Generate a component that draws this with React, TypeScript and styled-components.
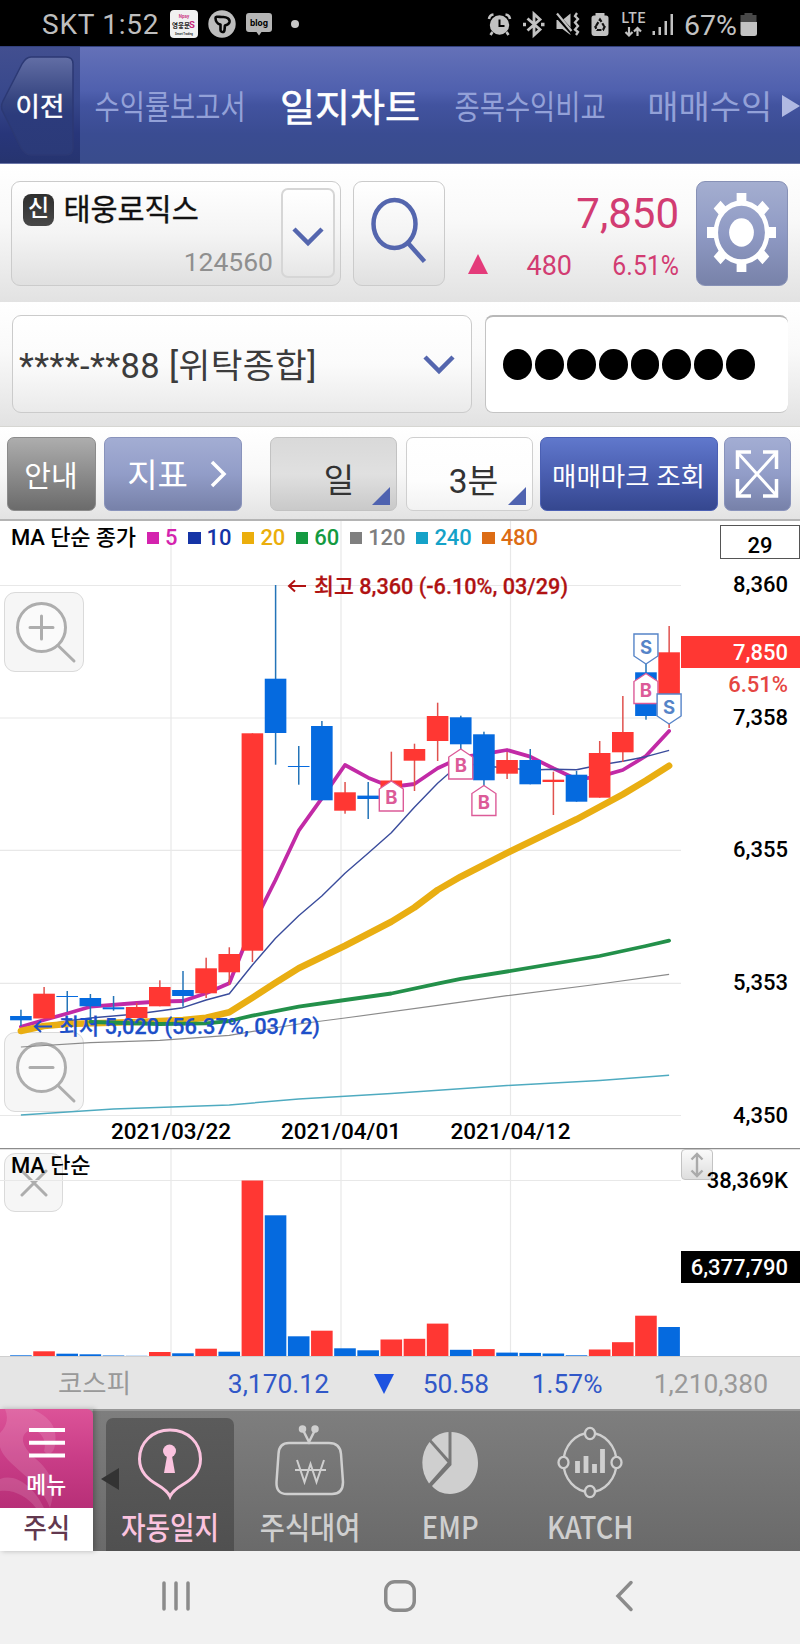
import React from "react";
import styled, { createGlobalStyle, css } from "styled-components";

const GlobalStyle = createGlobalStyle`
  * { box-sizing: border-box; }
  body { margin: 0; background: #fff; font-family: Roboto, "Noto Sans CJK KR", sans-serif; }
  svg { display: block; flex: none; }
`;

const RED = "#ff3733";
const BLUE = "#056adf";
const INDIGO = "#5466ae";

const Screen = styled.div`
  width: 800px;
  height: 1644px;
  display: flex;
  flex-direction: column;
  overflow: hidden;
  background: #fff;
`;

/* ---------- status bar ---------- */

const StatusBar = styled.header`
  height: 46px;
  flex: none;
  display: flex;
  align-items: center;
  justify-content: space-between;
  padding: 1px 43px 0 42px;
  background: #000;
  color: #bebebe;
  font-size: 28px;
  line-height: 46px;
`;

const StatusSide = styled.div<{ $gap: number }>`
  display: flex;
  align-items: center;
  gap: ${(p) => p.$gap}px;
`;

const Carrier = styled.span`
  width: 118px;
  padding-top: 2px;
  white-space: nowrap;
  letter-spacing: 0.75px;
`;

const Dot = styled.i`
  width: 8px;
  height: 8px;
  margin-left: 9px;
  border-radius: 50%;
  background: #c8c8c8;
`;

/* ---------- top tabs ---------- */

const TabBar = styled.nav`
  height: 118px;
  flex: none;
  display: flex;
  border-top: 1px solid #32407c;
  border-bottom: 1px solid #6b76a8;
  background: linear-gradient(#6471b8, #4f60ae 38%, #42539f 50%, #3a4c92 75%, #394c8c);
`;

const BackCell = styled.div`
  position: relative;
  width: 80px;
  background: linear-gradient(#424f90, #37478b 45%, #28367a 75%, #26346f);
`;

const BackLabel = styled.span`
  position: absolute;
  left: 0;
  top: 42px;
  width: 80px;
  text-align: center;
  color: #fff;
  font-size: 26.5px;
  line-height: 36px;
  -webkit-text-stroke: 0.5px;
`;

const Tab = styled.a<{ $active?: boolean; $scale?: number }>`
  position: relative;
  width: 180px;
  flex: none;
  display: flex;
  align-items: center;
  justify-content: center;
  padding: 0 0 ${(p) => (p.$active ? 2 : 0)}px;
  white-space: nowrap;
  color: ${(p) => (p.$active ? "#fff" : "#93a1d8")};
  font-size: ${(p) => (p.$active ? 38 : 33)}px;
  -webkit-text-stroke: ${(p) => (p.$active ? 0.6 : 0)}px;
  span {
    transform: scaleX(${(p) => p.$scale ?? 1});
  }
`;

const MoreTabs = styled.i`
  position: absolute;
  right: 0;
  top: 48px;
  border-left: 18px solid #b0b9e2;
  border-top: 11px solid transparent;
  border-bottom: 11px solid transparent;
`;

/* ---------- stock and account rows ---------- */

const band = css`
  flex: none;
  display: flex;
  background: linear-gradient(#fff, #f9f9f9 40%, #e2e2e2);
`;

const StockRow = styled.section`
  ${band}
  height: 138px;
  padding: 17px 12.5px 16px 11px;
  gap: 12px;
`;

const panel = css`
  border: 1.5px solid #cbcbcb;
  border-radius: 9px;
  background: linear-gradient(#fff, #f4f4f4 50%, #e0e0e0);
`;

const StockBox = styled.div`
  ${panel}
  width: 330px;
  display: flex;
  padding: 6px 5px 6px 10px;
`;

const StockText = styled.div`
  flex: 1;
  display: flex;
  flex-direction: column;
  justify-content: space-between;
  padding: 0 8px 0 0;
`;

const StockName = styled.div`
  display: flex;
  align-items: center;
  gap: 9.5px;
  height: 40px;
  white-space: nowrap;
  color: #111;
  font-size: 29.4px;
  line-height: 40px;
`;

const StockLabel = styled.span`
  padding-top: 4px;
  -webkit-text-stroke: 0.35px;
`;

const Badge = styled.span`
  width: 31px;
  height: 32px;
  margin: 4px 0 0 1px;
  border-radius: 8px;
  background: linear-gradient(#2e2e2e, #484848);
  color: #fff;
  font-size: 23px;
  font-weight: 500;
  line-height: 30px;
  text-align: center;
`;

const StockCode = styled.div`
  height: 40px;
  text-align: right;
  color: #8f8f8f;
  font-size: 26.5px;
  line-height: 46px;
`;

const DropButton = styled.button`
  width: 54px;
  height: 90px;
  padding: 7px 0 0;
  display: grid;
  place-items: center;
  border: 2px solid #d6d6d6;
  border-radius: 7px;
  background: linear-gradient(#fff, #f4f4f4 60%, #e6e6e6);
`;

const SearchButton = styled.button`
  ${panel}
  width: 92px;
  padding: 0 0 8px 0;
  display: grid;
  place-items: center;
`;

const GearButton = styled.button`
  width: 92px;
  padding: 0 0 2px 0;
  display: grid;
  place-items: center;
  border: 1px solid #8791b6;
  border-radius: 9px;
  background: linear-gradient(#a4aed0, #8f9ac4 50%, #7882a9);
`;

const Quote = styled.div`
  flex: 1;
  padding: 10px 4.5px 0 0;
  color: #d23c72;
  text-align: right;
`;

const Price = styled.div`
  height: 46px;
  font-size: 42px;
  line-height: 46px;
`;

const Change = styled.div`
  display: grid;
  grid-template-columns: 31px 84px 107px;
  align-items: center;
  height: 53px;
  font-size: 27px;
  line-height: 50px;
  span { padding-top: 4px; }
`;

const ChangeRate = styled.span`
  transform: scaleX(0.92);
  transform-origin: right;
`;

const Triangle = styled.i<{ $down?: boolean }>`
  width: 0;
  height: 0;
  justify-self: end;
  border-left: 10px solid transparent;
  border-right: 10px solid transparent;
  ${(p) => (p.$down ? "border-top: 20px solid #1d52e0;" : "border-bottom: 20px solid #e43b7a;")}
`;

const AccountRow = styled.section`
  ${band}
  height: 125px;
  padding: 13px 12px 13px;
  gap: 13px;
  border-bottom: 1px solid #d6d6d2;
`;

const AccountSelect = styled.div`
  ${panel}
  background: linear-gradient(#fff, #fbfbfb 50%, #eaeaea);
  width: 460px;
  display: flex;
  align-items: center;
  justify-content: space-between;
  padding: 0 16px 3px 6px;
  color: #3c3c3c;
  font-size: 34.5px;
  letter-spacing: 0.4px;
  white-space: nowrap;
  svg { position: relative; top: 2px; }
`;

const PasswordField = styled.div`
  flex: 1;
  display: flex;
  align-items: center;
  gap: 3px;
  padding-left: 17px;
  border: 1.5px solid #c4c4c4;
  border-right: 0;
  border-top: 2px solid #b8b8b8;
  border-radius: 8px;
  background: #fff;
  i {
    width: 28.9px;
    height: 30.5px;
    border-radius: 50%;
    background: #000;
  }
`;

/* ---------- chart toolbar ---------- */

const Toolbar = styled.section`
  height: 94px;
  flex: none;
  display: flex;
  padding: 10px 9px 9px 6.5px;
  background: linear-gradient(#fff, #f8f8f8 50%, #e3e3e3);
  border-bottom: 2px solid #b4b4b4;
`;

type Tone = "gray" | "light" | "blue" | "period" | "plain";

const tones: Record<Tone, string> = {
  gray: "background: linear-gradient(#adadad, #6b6b6b); color: #fff; border-color: #8b8b8b;",
  light: "background: linear-gradient(#a3add3, #929dc8 50%, #7781a9); color: #fff; border-color: #8993bb;",
  blue: "background: linear-gradient(#6078cc, #4a5eb0 50%, #35478f); color: #fff; border-color: #4b60b4;",
  period: "background: linear-gradient(#d9d9d9, #e0e0e0 50%, #c9c9c9); color: #333; border-color: #c2c2c2;",
  plain: "background: linear-gradient(#fff, #fdfdfd 60%, #f2f2f2); color: #333; border-color: #cfcfcf;",
};

const ToolButton = styled.button<{ $tone: Tone; $w: number; $size?: number; $ml?: number }>`
  position: relative;
  width: ${(p) => p.$w}px;
  height: 74px;
  margin-left: ${(p) => p.$ml ?? 8}px;
  padding: 0;
  flex: none;
  display: flex;
  align-items: center;
  justify-content: center;
  border: 1.5px solid;
  border-radius: 7px;
  font-family: inherit;
  font-size: ${(p) => p.$size ?? 29}px;
  white-space: nowrap;
  ${(p) => tones[p.$tone]}
`;

const IndicatorLabel = styled.span`
  margin: 0 22px 2px 9px;
`;

const PeriodText = styled.span<{ $indent: number }>`
  padding: 8px 0 0 ${(p) => p.$indent}px;
`;

const Corner = styled.i`
  position: absolute;
  right: 6px;
  bottom: 5px;
  border-left: 18px solid transparent;
  border-bottom: 18px solid #4f63b0;
`;

/* ---------- chart ---------- */

const ChartPane = styled.section<{ $h: number }>`
  position: relative;
  height: ${(p) => p.$h}px;
  flex: none;
  overflow: hidden;
  background: #fff;
`;

const Plot = styled.svg`
  position: relative;
`;

const Legend = styled.div<{ $top: number }>`
  position: absolute;
  left: 11px;
  top: ${(p) => p.$top}px;
  display: flex;
  align-items: center;
  height: 30px;
  white-space: nowrap;
  color: #000;
  font-size: 22px;
  font-weight: 500;
  letter-spacing: -0.12px;
  line-height: 30px;
`;

const LegendItem = styled.span<{ $color: string }>`
  display: flex;
  align-items: center;
  gap: 6px;
  margin-left: 10.6px;
  color: ${(p) => p.$color};
  &::before {
    content: "";
    width: 12.5px;
    height: 12.5px;
    background: ${(p) => p.$color};
  }
`;

const Overlay = styled.button<{ $top: number; $size: number }>`
  position: absolute;
  left: 4px;
  top: ${(p) => p.$top}px;
  width: ${(p) => p.$size}px;
  height: ${(p) => p.$size}px;
  padding: 0;
  display: grid;
  place-items: center;
  border: 1.5px solid #dadada;
  border-radius: 11px;
  background: #f6f6f6;
`;

const CountBox = styled.div`
  position: absolute;
  right: 0;
  top: 4px;
  width: 80px;
  height: 34px;
  border: 1.5px solid #555;
  color: #000;
  text-align: center;
  font-weight: 500;
  font-size: 22px;
  line-height: 39px;
`;

const AxisTag = styled.div<{ $top: number; $bg: string }>`
  position: absolute;
  right: 0;
  top: ${(p) => p.$top}px;
  width: 119px;
  height: 32px;
  padding-right: 12px;
  background: ${(p) => p.$bg};
  color: #fff;
  text-align: right;
  font-weight: 500;
  font-size: 22px;
  line-height: 34px;
`;

const AxisLabel = styled.div<{ $y: number; $color?: string }>`
  position: absolute;
  right: 12px;
  top: ${(p) => p.$y - 15}px;
  color: ${(p) => p.$color ?? "#000"};
  font-weight: 500;
  font-size: 22px;
  line-height: 30px;
`;

const ResizeHandle = styled.button`
  position: absolute;
  left: 681px;
  top: 1px;
  width: 32px;
  height: 31px;
  padding: 0;
  display: grid;
  place-items: center;
  border: 1.5px solid #c3c3c3;
  border-radius: 4px;
  background: linear-gradient(#fafafa, #dedede);
`;

/* ---------- index strip ---------- */

const IndexBar = styled.section`
  height: 53px;
  flex: none;
  display: grid;
  grid-template-columns: 189px 140px 64.5px 95.5px 113.5px 165.5px;
  align-items: center;
  border-top: 1px solid #cfcfcf;
  background: #e5e5e5;
  color: #3158c8;
  text-align: right;
  font-size: 26.4px;
  line-height: 52px;
  span { padding-top: 1px; }
`;

const IndexName = styled.span`
  text-align: center;
  color: #999;
`;

const IndexVolume = styled.span`
  color: #999;
`;

/* ---------- bottom navigation ---------- */

const BottomNav = styled.nav`
  height: 142px;
  flex: none;
  display: flex;
  border-top: 2px solid #979797;
  background: linear-gradient(#7e7e7e, #6a6a6a);
`;

const MenuCell = styled.div`
  position: relative;
  width: 93px;
  height: 142px;
  margin: -2px 7px 0 0;
  display: flex;
  flex-direction: column;
  color: #fff;
  box-shadow: 2px 0 5px rgba(0, 0, 0, 0.25);
`;

const MenuTop = styled.div`
  position: relative;
  height: 99px;
  overflow: hidden;
  border-top-right-radius: 6px;
  background: linear-gradient(#dc5398, #c93d87 50%, #b72f77);
  text-align: center;
  font-size: 23px;
  font-weight: 500;
  line-height: 30px;
`;

const MenuContent = styled.div`
  position: absolute;
  left: 0;
  top: 19px;
  width: 93px;
  display: flex;
  flex-direction: column;
  align-items: center;
  gap: 13px;
`;

const MenuLabel = styled.span`
  transform: scaleX(0.94);
`;

const MenuBottom = styled.div`
  flex: 1;
  background: #fff;
  color: #62384f;
  text-align: center;
  font-size: 27px;
  font-weight: 500;
  line-height: 42px;
  span { display: inline-block; transform: scaleX(0.94); }
`;

const Collapse = styled.i`
  position: absolute;
  left: 101px;
  top: 59px;
  z-index: 1;
  border-right: 18px solid #333;
  border-top: 11px solid transparent;
  border-bottom: 11px solid transparent;
`;

const NavItem = styled.a<{ $active?: boolean }>`
  width: 128px;
  margin: 7px 6px 0;
  display: flex;
  flex-direction: column;
  align-items: center;
  border-radius: 7px 7px 0 0;
  background: ${(p) => (p.$active ? "linear-gradient(#5b5b5b, #505050)" : "none")};
  color: ${(p) => (p.$active ? "#fbc3df" : "#cfcfcf")};
  svg { height: 90px; }
`;

const NavLabel = styled.span<{ $scale: number }>`
  white-space: nowrap;
  font-size: 31px;
  font-weight: 500;
  line-height: 36px;
  font-family: "Noto Sans CJK KR", sans-serif;
  transform: scaleX(${(p) => p.$scale});
`;

const SystemNav = styled.footer`
  flex: 1;
  display: flex;
  align-items: center;
  padding: 0 0 4px 159px;
  gap: 193px;
  background: #f1f1f1;
`;

/* ---------- chart data ---------- */

const STEP = 23.15;
const X0 = 20.9;
const cx = (i: number) => X0 + STEP * i;

type Candle = [up: 0 | 1, top: number, bottom: number, high: number, low: number];

const candles: Candle[] = [
  [0, 1016, 1020.3, 1009.7, 1026],
  [1, 993.7, 1018.5, 987, 1018.5],
  [0, 996, 997, 991, 1012],
  [0, 998, 1006.3, 994, 1018],
  [0, 1007.3, 1009.3, 996, 1010.7],
  [1, 1007, 1018, 1003, 1018],
  [1, 987, 1006.3, 980.3, 1006.3],
  [0, 990, 996, 971, 1006.7],
  [1, 968.3, 993.3, 957.7, 998],
  [1, 954, 972.3, 947.3, 985],
  [1, 733.3, 950.7, 733.3, 962],
  [0, 678.7, 733, 585, 764.7],
  [0, 766, 767, 746, 784.7],
  [0, 726, 800.3, 721, 800.3],
  [1, 792.3, 810.7, 782, 813.7],
  [0, 795.6, 799, 782, 819],
  [1, 780.5, 790, 751.7, 790],
  [1, 749, 760.7, 743.7, 791],
  [1, 716, 741, 702.7, 761],
  [0, 717.3, 744.3, 715.7, 750],
  [0, 734.3, 780.3, 731.7, 786],
  [1, 760, 773.7, 752, 779],
  [0, 760, 784.3, 749, 784.3],
  [1, 779.7, 782, 771.7, 815],
  [0, 774.7, 801.7, 771, 801.7],
  [1, 753, 797.7, 741, 797.7],
  [1, 732, 752.3, 696, 762],
  [0, 672.3, 716, 664, 719.7],
  [1, 652.3, 700, 626, 728],
];

const volumes = [
  0.7, 4.7, 2.3, 1.7, 0.5, 0.2, 4, 2.7, 7.3, 4.3, 175.5, 140.7, 19.7, 25.3, 7.7, 5.7, 16.5, 17.2,
  32.4, 6.2, 6.9, 3.4, 3.1, 2.5, 0.7, 6.5, 13.8, 40.3, 29,
];
const volumeUp = new Set([1, 6, 8, 10, 13, 16, 17, 18, 20, 25, 26, 27]);

type Point = [index: number, y: number];

const ma5: Point[] = [
  [0, 1026.7], [1, 1020], [2, 1013.5], [3, 1006.7], [5, 1003], [6, 1001.5], [7, 1001], [8, 993.3],
  [9, 983.3], [10, 926], [11, 880], [12, 830.7], [13, 798.3], [14, 765], [15, 777.7], [16, 787],
  [17, 784], [18, 768.3], [19, 757.5], [20, 754], [21, 750], [22, 756.7], [23, 768.3], [24, 779.3],
  [25, 776.7], [26, 770], [27, 756], [28, 731],
];
const ma10: Point[] = [
  [0, 1029], [2, 1021], [3, 1018], [5, 1014], [7, 1007.7], [8, 1000], [9, 993.7], [10, 965],
  [11, 938.3], [12, 915.7], [13, 896], [14, 873.3], [15, 853.3], [16, 832.7], [17, 807.3],
  [18, 783.3], [19, 763], [20, 766], [21, 768], [22, 770], [23, 769.3], [24, 769.7], [25, 765],
  [26, 761.3], [27, 756.7], [28, 750.3],
];
const ma20: Point[] = [
  [0, 1031], [1, 1026], [2, 1024], [5, 1022], [7, 1020], [8, 1017.7], [9, 1012.3], [10, 997.7],
  [11, 982.7], [12, 968.3], [14, 945.7], [16, 921.7], [17, 907.5], [18, 890], [19, 876.7],
  [21, 853], [23, 830.5], [24, 819.3], [26, 794.3], [27, 780.5], [28, 765.7],
];
const ma60: Point[] = [
  [0, 1030], [1, 1022], [3, 1022], [6, 1024], [8, 1023.3], [9, 1021], [10, 1015.7], [12, 1006.7],
  [14, 1000], [16, 993.5], [18, 983.6], [19, 978.8], [21, 971.5], [25, 956], [27, 946], [28, 940.6],
];
const ma120: Point[] = [
  [0, 1047], [3, 1042.7], [6, 1040.3], [9, 1035.3], [12, 1024], [14, 1018], [18, 1005.3],
  [21, 995.7], [25, 984], [28, 974.3],
];
const ma240: Point[] = [
  [0, 1115], [4, 1109], [9, 1105], [12, 1099], [16, 1093.4], [21, 1085.5], [25, 1080.4], [28, 1075.2],
];

const toPoints = (line: Point[]) => line.map(([i, y]) => `${cx(i).toFixed(1)},${y}`).join(" ");

const Average = ({ line, color, width }: { line: Point[]; color: string; width: number }) => (
  <polyline
    points={toPoints(line)}
    fill="none"
    stroke={color}
    strokeWidth={width}
    strokeLinecap={width > 2 ? "round" : "butt"}
    strokeLinejoin="round"
  />
);

const markFont = { fontFamily: "Inter, Roboto, sans-serif", fontWeight: 700, fontSize: 18.5 };

/* Trade flags: a buy flag points up at its tip, a sell flag points down. */
const Flag = ({ kind, index, tip }: { kind: "B" | "S"; index: number; tip: number }) => {
  const x = cx(index);
  const dir = kind === "B" ? 1 : -1;
  const color = kind === "B" ? "#dc5b98" : "#5584c8";
  return (
    <g>
      <path
        d={`M${x} ${tip} L${x + 12} ${tip + 8 * dir} V${tip + 30 * dir} H${x - 12} V${tip + 8 * dir} Z`}
        fill="#fff"
        stroke={color}
        strokeWidth="1.4"
      />
      <text x={x} y={tip + 18 * dir + (dir > 0 ? 5 : 8)} textAnchor="middle" fill={color} {...markFont}>
        {kind}
      </text>
    </g>
  );
};

const gridX = [171, 341, 510.5];

const PriceChart = () => (
  <Plot width="800" height="627" viewBox="0 521 800 627">
    <g stroke="#e8e8e8" strokeWidth="1.2">
      {[585.5, 718, 850.3, 983.3, 1115.5].map((y) => (
        <line key={y} x1="0" x2="681" y1={y} y2={y} />
      ))}
      {gridX.map((x) => (
        <line key={x} x1={x} x2={x} y1="520" y2="1115" />
      ))}
    </g>
    <Average line={ma5} color="#c22aa6" width={3.8} />
    <Average line={ma10} color="#3a4c9c" width={1.4} />
    <Average line={ma20} color="#e9ae12" width={6.6} />
    <Average line={ma60.slice(2)} color="#23904a" width={3.8} />
    <Average line={ma120} color="#8b8b8b" width={1.2} />
    <Average line={ma240} color="#4fabc0" width={1.5} />
    {candles.map(([up, top, bottom, high, low], i) => (
      <g key={i} fill={up ? RED : BLUE}>
        <rect x={cx(i) - 0.7} y={high} width="1.5" height={low - high} fill={up ? "#e0524e" : "#2474b8"} />
        <rect x={cx(i) - 10.8} y={top} width="21.6" height={bottom - top} />
      </g>
    ))}
    <Flag kind="B" index={16} tip={781} />
    <Flag kind="B" index={19} tip={749} />
    <Flag kind="B" index={20} tip={785.5} />
    <Flag kind="S" index={27} tip={664} />
    <Flag kind="B" index={27} tip={673.5} />
    <Flag kind="S" index={28} tip={724} />
    <g fontWeight="500" fontSize="22">
      <g fill="#b01212" stroke="#b01212" strokeWidth="0.25">
        <path d="M306 586 H289 M295 580.5 L289 586 L295 591.5" fill="none" strokeWidth="2" />
        <text x="314" y="594.3" textLength="254" lengthAdjust="spacingAndGlyphs">
          최고 8,360 (-6.10%, 03/29)
        </text>
      </g>
      <g fill="#1d4fc9" stroke="#1d4fc9" strokeWidth="0.25">
        <path d="M52 1026.5 H35 M41 1021 L35 1026.5 L41 1032" fill="none" strokeWidth="2" />
        <text x="59" y="1034" textLength="261" lengthAdjust="spacingAndGlyphs">
          최저 5,020 (56.37%, 03/12)
        </text>
      </g>
      {["2021/03/22", "2021/04/01", "2021/04/12"].map((d, i) => (
        <text key={d} x={gridX[i]} y="1138.5" textAnchor="middle" textLength="120" lengthAdjust="spacingAndGlyphs">
          {d}
        </text>
      ))}
    </g>
  </Plot>
);

const VolumeChart = () => (
  <Plot width="800" height="208" viewBox="0 1148 800 208">
    <g stroke="#e8e8e8" strokeWidth="1.2">
      <line x1="0" x2="681" y1="1180.5" y2="1180.5" />
      {gridX.map((x) => (
        <line key={x} x1={x} x2={x} y1="1148" y2="1356" />
      ))}
    </g>
    {volumes.map((h, i) => (
      <rect key={i} x={cx(i) - 10.8} y={1356 - h} width="21.6" height={h} fill={volumeUp.has(i) ? RED : BLUE} />
    ))}
    <line x1="0" x2="800" y1="1148.5" y2="1148.5" stroke="#8c8c8c" strokeWidth="1.4" />
  </Plot>
);

/* ---------- icons ---------- */

const Chevron = () => (
  <svg width="32" height="22" viewBox="0 0 32 22" fill="none" stroke={INDIGO} strokeWidth="4.5">
    <path d="M2 3 L16 17 L30 3" />
  </svg>
);

const Magnifier = ({ sign }: { sign: "plus" | "minus" }) => (
  <svg width="80" height="80" viewBox="0 0 80 80" fill="none" stroke="#adadad" strokeWidth="3" strokeLinecap="round">
    <circle cx="36.5" cy="34.5" r="24" fill="#fafafa" />
    <path d="M53 52.5 L69 68" />
    <path d={sign === "plus" ? "M25 34.5 H48 M36.5 23 V46" : "M25 34.5 H48"} />
  </svg>
);

const Gear = () => (
  <svg width="69" height="79" viewBox="-39 -39 78 78" preserveAspectRatio="none" fill="#fff">
    {[0, 45, 90, 135].map((a) => (
      <path key={a} d="M-5.5 -39 H5.5 V-28 H-5.5 Z M-5.5 39 H5.5 V28 H-5.5 Z" transform={`rotate(${a})`} />
    ))}
    <circle r="29" fill="none" stroke="#fff" strokeWidth="5" />
    <circle r="14" />
  </svg>
);

const SearchIcon = () => (
  <svg width="58" height="68" viewBox="0 0 58 68" fill="none" stroke={INDIGO} strokeWidth="4.5">
    <ellipse cx="24.5" cy="28" rx="21" ry="24" />
    <path d="M38 47 L54.5 65.5" />
  </svg>
);

const Expand = () => (
  <svg width="44" height="48" viewBox="0 0 44 48" fill="none" stroke="#fff" strokeWidth="3">
    <path d="M3 3 L41 45 M41 3 L3 45" />
    <path d="M2.5 19 V2 H16 M28 2 H41.5 V19 M41.5 29 V46 H28 M16 46 H2.5 V29" strokeWidth="3.5" />
  </svg>
);

const NotificationIcons = () => (
  <>
    <svg width="28" height="28" viewBox="0 0 28 28">
      <rect width="28" height="28" rx="4" fill="#f1f1f1" />
      <g textAnchor="middle" fontWeight="700">
        <text x="14" y="7.5" fontSize="4.5" fill="#cc3c85">Npay</text>
        <text x="11" y="17.5" fontSize="6.5" fill="#222">영웅문</text>
        <text x="22" y="18" fontSize="9.5" fill="#c9277b">S</text>
        <text x="14" y="24.5" fontSize="2.8" fill="#333">Smart Trading</text>
      </g>
    </svg>
    <svg width="28" height="28" viewBox="0 0 28 28">
      <circle cx="14" cy="14" r="13.7" fill="#bdbdbd" />
      <path
        d="M7.5 8 C7.5 6 11 7 14 7 C19 6.5 22 9 21.5 12 C21 14.5 19 15 17 15.5 C16.5 17 17 20 16 21.5 C15 22.5 12.5 22 12.5 20 V14.5 C9.5 14 7.5 11 7.5 8 Z"
        fill="none"
        stroke="#050505"
        strokeWidth="2.6"
        strokeLinejoin="round"
      />
    </svg>
    <svg width="26" height="24" viewBox="0 0 26 24">
      <path d="M3 1 H23 Q26 1 26 4 V17 Q26 20 23 20 H15.5 L13 23.5 L10.5 20 H3 Q0 20 0 17 V4 Q0 1 3 1 Z" fill="#b5b5b5" />
      <text x="13" y="13.5" textAnchor="middle" fontSize="9" fontWeight="700" fontFamily="Inter, sans-serif" textLength="18" lengthAdjust="spacingAndGlyphs">blog</text>
    </svg>
  </>
);

const SystemIcons = () => (
  <svg width="270" height="46" viewBox="487.5 0 270 46" fill="#c2c2c2">
    <g stroke="#c2c2c2" fill="none">
      <circle cx="500" cy="24" r="8.2" fill="#c2c2c2" strokeWidth="3" />
      <path d="M489.5 18 Q490 14 494 13.5 M510.5 18 Q510 14 506 13.5 M493 31 L491 34 M507 31 L509 34" strokeWidth="2.6" />
      <path d="M500 18.5 V25 H505" stroke="#000" strokeWidth="2" />
      <path d="M528 17.5 L540.5 28.5 L534.5 34 V13 L540.5 18.5 L528 29.5" strokeWidth="2.8" />
      <path d="M523.5 23.5 H526.5 M541.5 23.5 H545" strokeWidth="3.5" />
    </g>
    <path d="M557 19 H563 L571 12.5 V34 L563 28 H557 Z" />
    <path d="M556 13 L573 32" stroke="#000" strokeWidth="4.5" />
    <path d="M557.5 12.5 L572 30" stroke="#c2c2c2" strokeWidth="2.2" />
    <path d="M577.5 12 L575.5 15 L578.5 18 L575.5 21.5 L578.5 25 L575.5 28.5 L578.5 31 L576.5 34" fill="none" stroke="#c2c2c2" strokeWidth="2.3" />
    <path d="M596 12 H605 V14.5 H606.5 Q609 14.5 609 17 V32 Q609 35 606 35 H595 Q592 35 592 32 V17 Q592 14.5 594.5 14.5 H596 Z" />
    <path d="M596.5 25 L600.5 18.5 L604.5 25 M605.5 25 L603.5 29 H597.5 L595.5 25" fill="none" stroke="#111" strokeWidth="2.2" strokeDasharray="4.5 1.5" />
    <text x="622" y="22" fontSize="14" fontWeight="500" textLength="24">LTE</text>
    <path d="M629.5 26 V34 M626 31 L629.5 34.5 L633 31 M638 35 V27.5 M634.5 30.5 L638 27 L641.5 30.5" fill="none" stroke="#c2c2c2" strokeWidth="2.2" />
    <path d="M653 30 H655.5 V34 H653 Z M659 26 H661.5 V34 H659 Z M665 20 H667.5 V34 H665 Z M671 13 H673.5 V34 H671 Z" />
    <text x="684.5" y="34" fontSize="28" textLength="53" lengthAdjust="spacingAndGlyphs">67%</text>
    <path d="M745 12 H753 V14 H757 V21 H741 V14 H745 Z" fill="#484848" />
    <path d="M741 21 H757.5 V33 Q757.5 35 755 35 H743.5 Q741 35 741 33 Z" />
  </svg>
);

const DiaryIcon = () => (
  <svg width="128" viewBox="0 0 128 90">
    <path
      d="M64 12 C46 12 33.5 25 33.5 41 C33.5 54 42 61 51 66.5 C57 70 62 74 64 78.5 C66 74 71 70 77 66.5 C86 61 94.5 54 94.5 41 C94.5 25 82 12 64 12 Z"
      fill="none"
      stroke="#fbc3df"
      strokeWidth="3"
    />
    <circle cx="63.5" cy="33" r="6.5" fill="#fbc3df" />
    <path d="M61 38 H66 L69 55 H58 Z" fill="#fbc3df" />
  </svg>
);

const TvIcon = () => (
  <svg width="128" viewBox="0 0 128 90" fill="none" stroke="#cfcfcf" strokeWidth="2.5">
    <path d="M43 25 H83 Q94 25 95 36 L97 64 Q97 76 86 76 H41 Q30 76 30.5 64 L32.5 36 Q33 25 43 25 Z" />
    <path d="M57 12 L63 24 L69 12" />
    <circle cx="56.5" cy="11" r="2.5" fill="#cfcfcf" />
    <circle cx="69" cy="11" r="2.5" fill="#cfcfcf" />
    <path d="M51 42 L58.5 64 L64.5 46 L70.5 64 L78 42 M49 52 H80" strokeWidth="2" />
  </svg>
);

const PieIcon = () => (
  <svg width="128" viewBox="0 0 128 90" fill="#cfcfcf">
    <path d="M65.5 14 C81 14 92 28 92 45 C92 62 80 76 64 76 C57 76 50 73 46 68 L65.5 47 Z" />
    <path d="M62.5 14 V41 L45.5 22 C50 17 56 14.5 62.5 14 Z" />
    <path d="M43.5 24 L61.5 44.5 L43 65.5 C34 53 34 36 43.5 24 Z" />
  </svg>
);

const KatchIcon = () => (
  <svg width="128" viewBox="0 0 128 90" fill="none" stroke="#cfcfcf" strokeWidth="2.3">
    <ellipse cx="64" cy="44.5" rx="26.5" ry="29.5" />
    <g fill="#747474">
      <ellipse cx="64" cy="15.5" rx="5" ry="5.7" />
      <ellipse cx="64" cy="73.5" rx="5" ry="5.7" />
      <ellipse cx="37.5" cy="44.5" rx="5" ry="5.7" />
      <ellipse cx="90.5" cy="44.5" rx="5" ry="5.7" />
    </g>
    <path d="M51.5 55 V43 M60 55 V38 M68.5 55 V46 M76.5 55 V31" strokeWidth="4.8" />
  </svg>
);

const legend: [string, string][] = [
  ["5", "#d423ae"],
  ["10", "#1534a6"],
  ["20", "#ebae0c"],
  ["60", "#149a41"],
  ["120", "#7f7f7f"],
  ["240", "#15a2c8"],
  ["480", "#dc6c15"],
];

export default function App() {
  return (
    <>
      <GlobalStyle />
      <Screen>
        <StatusBar>
          <StatusSide $gap={10}>
            <Carrier>SKT 1:52</Carrier>
            <NotificationIcons />
            <Dot />
          </StatusSide>
          <SystemIcons />
        </StatusBar>

        <TabBar>
          <BackCell>
            <svg width="80" height="116" viewBox="0 0 80 116">
              <defs>
                <linearGradient id="back" x1="0" y1="0" x2="0" y2="1">
                  <stop offset="0" stopColor="#626ea5" />
                  <stop offset=".45" stopColor="#34437f" />
                  <stop offset=".6" stopColor="#2c3b7c" />
                  <stop offset="1" stopColor="#2b3a78" />
                </linearGradient>
              </defs>
              <path
                d="M31 10 H66 Q73 10 73 17 V101 Q73 108 66 108 H31 Q25 108 21 101 L3 65 Q0 60 3 54 L22 17 Q26 10 31 10 Z"
                fill="url(#back)"
                stroke="#2c3974"
                strokeWidth="1.5"
              />
            </svg>
            <BackLabel>이전</BackLabel>
          </BackCell>
          <Tab $scale={0.83}><span>수익률보고서</span></Tab>
          <Tab $active><span>일지차트</span></Tab>
          <Tab $scale={0.83}><span>종목수익비교</span></Tab>
          <Tab $scale={1.03}>
            <span>매매수익</span>
            <MoreTabs />
          </Tab>
        </TabBar>

        <StockRow>
          <StockBox>
            <StockText>
              <StockName>
                <Badge>신</Badge>
                <StockLabel>태웅로직스</StockLabel>
              </StockName>
              <StockCode>124560</StockCode>
            </StockText>
            <DropButton><Chevron /></DropButton>
          </StockBox>
          <SearchButton><SearchIcon /></SearchButton>
          <Quote>
            <Price>7,850</Price>
            <Change>
              <Triangle />
              <span>480</span>
              <ChangeRate>6.51%</ChangeRate>
            </Change>
          </Quote>
          <GearButton><Gear /></GearButton>
        </StockRow>

        <AccountRow>
          <AccountSelect>
            ****-**88 [위탁종합]
            <Chevron />
          </AccountSelect>
          <PasswordField>
            {Array.from({ length: 8 }, (_, i) => <i key={i} />)}
          </PasswordField>
        </AccountRow>

        <Toolbar>
          <ToolButton $tone="gray" $w={89} $ml={0}>안내</ToolButton>
          <ToolButton $tone="light" $w={138} $size={33}>
            <IndicatorLabel>지표</IndicatorLabel>
            <svg width="17" height="28" viewBox="0 0 17 28" fill="none" stroke="#fff" strokeWidth="3.5">
              <path d="M2 2 L14 14 L2 26" />
            </svg>
          </ToolButton>
          <ToolButton $tone="period" $w={127} $size={33} $ml={28}>
            <PeriodText $indent={12}>일</PeriodText>
            <Corner />
          </ToolButton>
          <ToolButton $tone="plain" $w={127} $size={33.5} $ml={9}>
            <PeriodText $indent={9}>3분</PeriodText>
            <Corner />
          </ToolButton>
          <ToolButton $tone="blue" $w={178} $size={26.5} $ml={7}>
            매매마크 조회
          </ToolButton>
          <ToolButton $tone="light" $w={67} $ml={6}><Expand /></ToolButton>
        </Toolbar>

        <ChartPane $h={627}>
          <Overlay $top={71} $size={80}><Magnifier sign="plus" /></Overlay>
          <Overlay $top={511} $size={80}><Magnifier sign="minus" /></Overlay>
          <PriceChart />
          <Legend $top={2}>
            MA 단순 종가
            {legend.map(([label, color]) => (
              <LegendItem key={label} $color={color}>{label}</LegendItem>
            ))}
          </Legend>
          <CountBox>29</CountBox>
          <AxisLabel $y={64}>8,360</AxisLabel>
          <AxisTag $top={114.5} $bg={RED}>7,850</AxisTag>
          <AxisLabel $y={163.5} $color="#e54542">6.51%</AxisLabel>
          <AxisLabel $y={197}>7,358</AxisLabel>
          <AxisLabel $y={329}>6,355</AxisLabel>
          <AxisLabel $y={462}>5,353</AxisLabel>
          <AxisLabel $y={594.5}>4,350</AxisLabel>
        </ChartPane>

        <ChartPane $h={208}>
          <Overlay $top={5} $size={59}>
            <svg width="28" height="28" viewBox="0 0 28 28" stroke="#adadad" strokeWidth="3" strokeLinecap="round">
              <path d="M2 2 L26 26 M26 2 L2 26" />
            </svg>
          </Overlay>
          <VolumeChart />
          <Legend $top={2.5}>MA 단순</Legend>
          <ResizeHandle>
            <svg width="14" height="26" viewBox="0 0 14 26" fill="none" stroke="#aaa" strokeWidth="2.4">
              <path d="M7 2 V24 M1.5 7.5 L7 2 L12.5 7.5 M1.5 18.5 L7 24 L12.5 18.5" />
            </svg>
          </ResizeHandle>
          <AxisLabel $y={32.5}>38,369K</AxisLabel>
          <AxisTag $top={103} $bg="#000">6,377,790</AxisTag>
        </ChartPane>

        <IndexBar>
          <IndexName>코스피</IndexName>
          <span>3,170.12</span>
          <Triangle $down />
          <span>50.58</span>
          <span>1.57%</span>
          <IndexVolume>1,210,380</IndexVolume>
        </IndexBar>

        <BottomNav>
          <MenuCell>
            <MenuTop>
              <svg width="94" height="99" viewBox="0 0 94 99" fill="#fff" fillOpacity=".13">
                <path d="M5 0 H32 C50 8 58 18 55 36 C54 44 48 48 44 42 C48 30 38 18 28 22 C18 28 24 40 36 50 C50 62 58 76 50 99 C40 70 4 56 0 38 V24 C4 20 10 12 5 0 Z" />
                <path d="M0 70 C16 64 34 78 44 99 H36 C28 88 14 80 0 82 Z" />
              </svg>
              <MenuContent>
                <svg width="36" height="30" viewBox="0 0 36 30" stroke="#fff" strokeWidth="4">
                  <path d="M0 2 H36 M0 14.7 H36 M0 27.5 H36" />
                </svg>
                <MenuLabel>메뉴</MenuLabel>
              </MenuContent>
            </MenuTop>
            <MenuBottom><span>주식</span></MenuBottom>
            <Collapse />
          </MenuCell>
          <NavItem $active>
            <DiaryIcon />
            <NavLabel $scale={0.86}>자동일지</NavLabel>
          </NavItem>
          <NavItem>
            <TvIcon />
            <NavLabel $scale={0.88}>주식대여</NavLabel>
          </NavItem>
          <NavItem>
            <PieIcon />
            <NavLabel $scale={0.88}>EMP</NavLabel>
          </NavItem>
          <NavItem>
            <KatchIcon />
            <NavLabel $scale={0.88}>KATCH</NavLabel>
          </NavItem>
        </BottomNav>

        <SystemNav>
          <svg width="32" height="32" viewBox="0 0 32 32" stroke="#8b8b8b" strokeWidth="3.5" strokeLinecap="round">
            <path d="M5 3 V29 M17 3 V29 M29 3 V29" />
          </svg>
          <svg width="32" height="32" viewBox="0 0 32 32" fill="none" stroke="#8b8b8b" strokeWidth="3.5">
            <rect x="1.75" y="1.75" width="28.5" height="28.5" rx="9" />
          </svg>
          <svg width="32" height="32" viewBox="0 0 32 32" fill="none" stroke="#8b8b8b" strokeWidth="3.5" strokeLinecap="round">
            <path d="M22 2.5 L9 16 L22 29.5" />
          </svg>
        </SystemNav>
      </Screen>
    </>
  );
}
